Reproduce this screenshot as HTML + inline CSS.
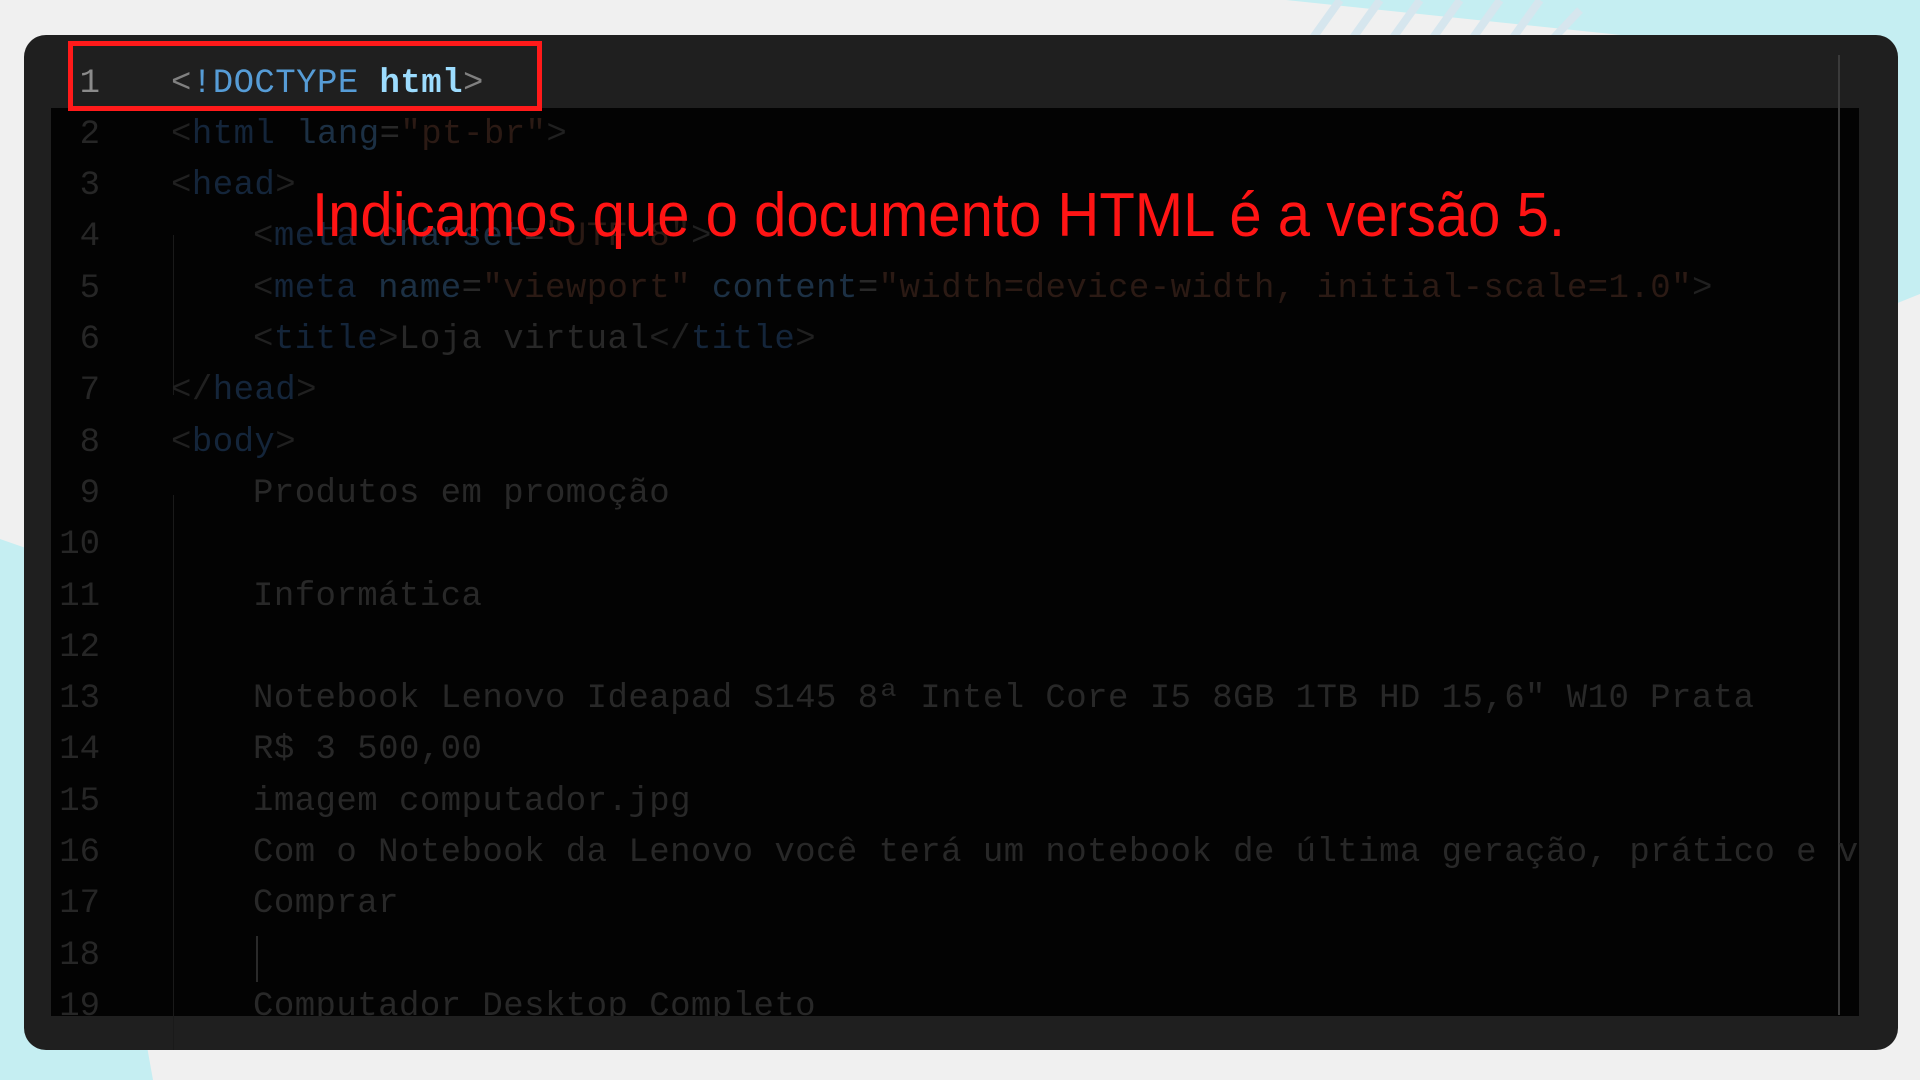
<!DOCTYPE html>
<html><head><meta charset="utf-8"><style>
*{margin:0;padding:0;box-sizing:border-box}
body{width:1920px;height:1080px;overflow:hidden;background:#f0f0f0;position:relative;font-family:"Liberation Mono",monospace}
.bg{position:absolute;left:0;top:0}
.panel{position:absolute;left:24px;top:35px;width:1874px;height:1015px;background:#1f1f1f;border-radius:22px;overflow:hidden}
.ov{position:absolute;left:27px;top:73px;width:1808px;height:908px;background:#030303}
.ln{position:absolute;left:0;width:1800px;height:51.3px;line-height:51.3px;font-size:34px;white-space:pre;letter-spacing:0.45px;margin-top:3.5px}
.n{position:absolute;left:0;width:76px;text-align:right;color:#262626;letter-spacing:0}
.c{position:absolute;left:147px;color:#282828}
.i{position:absolute;left:229px;color:#282828}
.t{color:#14253a}.p{color:#202020}.s{color:#2b1a14}.a{color:#1c3044}
.g{position:absolute;left:149px;width:1px;background:#1a1a1a}
</style></head><body>
<svg class="bg" width="1920" height="1080">
<polygon points="1286,0 1920,0 1920,294 1880,310 1860,60" fill="#c5eef2"/>
<g stroke="#d6e6ee" stroke-width="8">
<line x1="1310" y1="42" x2="1340" y2="0"/><line x1="1350" y1="42" x2="1380" y2="0"/><line x1="1390" y1="42" x2="1420" y2="0"/><line x1="1430" y1="42" x2="1460" y2="0"/><line x1="1470" y1="42" x2="1500" y2="0"/><line x1="1510" y1="42" x2="1540" y2="0"/><line x1="1550" y1="42" x2="1580" y2="10"/></g>
<polygon points="0,539 60,560 153,1080 0,1080" fill="#c5eef2"/>
</svg>
<div class="panel">
<div class="ov"></div>
<div style="position:absolute;left:1814px;top:20px;width:2px;height:960px;background:#3a3a3a"></div>
<div class="g" style="top:200px;height:160px"></div>
<div class="g" style="top:460px;height:560px"></div>
<div style="position:absolute;left:232px;top:901px;width:2px;height:46px;background:#2a2a2a"></div>
<div class="ln" style="top:20px"><span class="n" style="color:#8a8a8a">1</span><span class="c"><span style="color:#808080">&lt;</span><span style="color:#569cd6">!DOCTYPE</span> <b style="color:#9cdcfe">html</b><span style="color:#808080">&gt;</span></span></div>
<div class="ln" style="top:71.3px"><span class="n">2</span><span class="c"><span class="p">&lt;</span><span class="t">html</span> <span class="a">lang</span>=<span class="s">"pt-br"</span><span class="p">&gt;</span></span></div>
<div class="ln" style="top:122.6px"><span class="n">3</span><span class="c"><span class="p">&lt;</span><span class="t">head</span><span class="p">&gt;</span></span></div>
<div class="ln" style="top:173.9px"><span class="n">4</span><span class="i"><span class="p">&lt;</span><span class="t">meta</span> <span class="a">charset</span>=<span class="s">"UTF-8"</span><span class="p">&gt;</span></span></div>
<div class="ln" style="top:225.2px"><span class="n">5</span><span class="i"><span class="p">&lt;</span><span class="t">meta</span> <span class="a">name</span>=<span class="s">"viewport"</span> <span class="a">content</span>=<span class="s">"width=device-width, initial-scale=1.0"</span><span class="p">&gt;</span></span></div>
<div class="ln" style="top:276.5px"><span class="n">6</span><span class="i"><span class="p">&lt;</span><span class="t">title</span><span class="p">&gt;</span>Loja virtual<span class="p">&lt;/</span><span class="t">title</span><span class="p">&gt;</span></span></div>
<div class="ln" style="top:327.8px"><span class="n">7</span><span class="c"><span class="p">&lt;/</span><span class="t">head</span><span class="p">&gt;</span></span></div>
<div class="ln" style="top:379.1px"><span class="n">8</span><span class="c"><span class="p">&lt;</span><span class="t">body</span><span class="p">&gt;</span></span></div>
<div class="ln" style="top:430.4px"><span class="n">9</span><span class="i">Produtos em promoção</span></div>
<div class="ln" style="top:481.7px"><span class="n">10</span></div>
<div class="ln" style="top:533px"><span class="n">11</span><span class="i">Informática</span></div>
<div class="ln" style="top:584.3px"><span class="n">12</span></div>
<div class="ln" style="top:635.6px"><span class="n">13</span><span class="i">Notebook Lenovo Ideapad S145 8ª Intel Core I5 8GB 1TB HD 15,6" W10 Prata</span></div>
<div class="ln" style="top:686.9px"><span class="n">14</span><span class="i">R$ 3 500,00</span></div>
<div class="ln" style="top:738.2px"><span class="n">15</span><span class="i">imagem computador.jpg</span></div>
<div class="ln" style="top:789.5px"><span class="n">16</span><span class="i">Com o Notebook da Lenovo você terá um notebook de última geração, prático e v</span></div>
<div class="ln" style="top:840.8px"><span class="n">17</span><span class="i">Comprar</span></div>
<div class="ln" style="top:892.1px"><span class="n">18</span></div>
<div class="ln" style="top:943.4px;height:34px;overflow:hidden"><span class="n">19</span><span class="i">Computador Desktop Completo</span></div>
<div style="position:absolute;left:44px;top:6px;width:474px;height:70px;border:5px solid #ff1a1a"></div>
</div>
<svg style="position:absolute;left:0;top:0" width="1920" height="1080">
<text x="312" y="236" font-family="Liberation Sans, sans-serif" font-size="62" fill="#ff1414" textLength="1253" lengthAdjust="spacingAndGlyphs">Indicamos que o documento HTML é a versão 5.</text>
</svg>
</body></html>
